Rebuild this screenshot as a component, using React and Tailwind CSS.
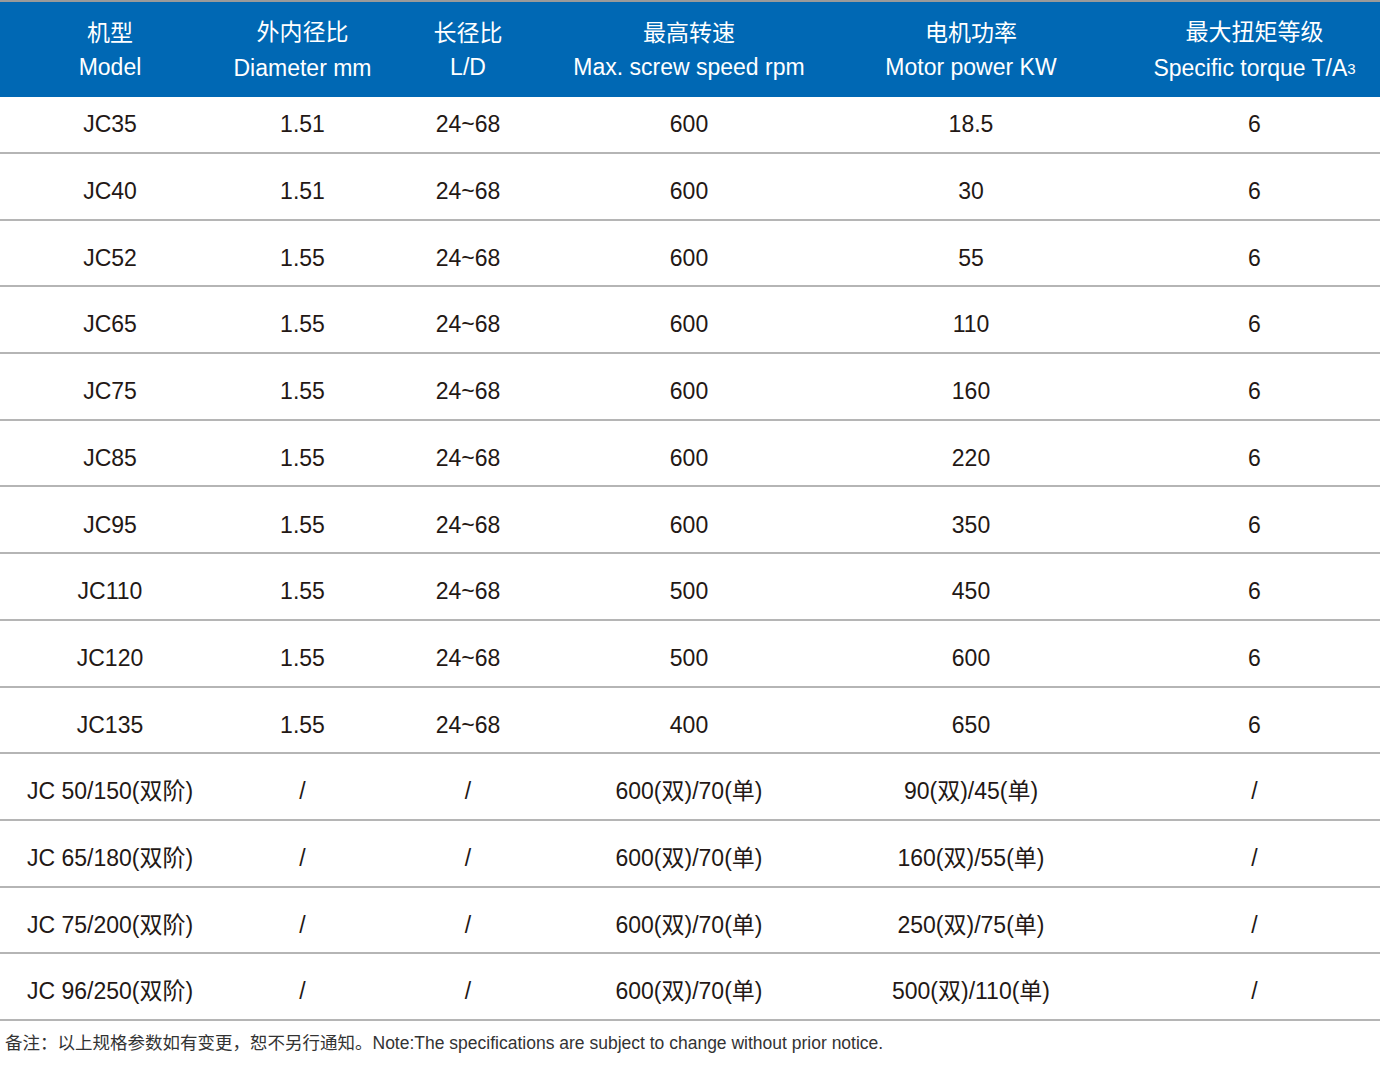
const rows = [
  ["JC35","1.51","24~68","600","18.5","6"],
  ["JC40","1.51","24~68","600","30","6"],
  ["JC52","1.55","24~68","600","55","6"],
  ["JC65","1.55","24~68","600","110","6"],
  ["JC75","1.55","24~68","600","160","6"],
  ["JC85","1.55","24~68","600","220","6"],
  ["JC95","1.55","24~68","600","350","6"],
  ["JC110","1.55","24~68","500","450","6"],
  ["JC120","1.55","24~68","500","600","6"],
  ["JC135","1.55","24~68","400","650","6"],
  ["JC 50/150(双阶)","/","/","600(双)/70(单)","90(双)/45(单)","/"],
  ["JC 65/180(双阶)","/","/","600(双)/70(单)","160(双)/55(单)","/"],
  ["JC 75/200(双阶)","/","/","600(双)/70(单)","250(双)/75(单)","/"],
  ["JC 96/250(双阶)","/","/","600(双)/70(单)","500(双)/110(单)","/"],
];
const grid = "grid grid-cols-[220px_165px_166px_276px_288px_1fr]";
export default function App() {
  return (
    <div className="w-[1380px] h-[1065px] bg-white text-[#231815]" style={{fontFamily:'"Liberation Sans","Noto Sans CJK SC",sans-serif'}}>
      <div className="h-[2px] bg-[#9a9a9a]" />
      <div className={`${grid} h-[95px] bg-[#0068b4] text-white text-[23px] leading-[34px] items-center text-center`}>
        <div><div>机型</div><div>Model</div></div>
        <div><div>外内径比</div><div className="mt-[2px]">Diameter mm</div></div>
        <div><div>长径比</div><div>L/D</div></div>
        <div><div>最高转速</div><div>Max. screw speed rpm</div></div>
        <div><div>电机功率</div><div>Motor power KW</div></div>
        <div className="pl-[14px] whitespace-nowrap"><div>最大扭矩等级</div><div className="mt-[2px]">Specific torque T/A<sup className="text-[15px] relative top-[-2px]">3</sup></div></div>
      </div>
      {rows.map((r, i) => (
        <div key={i} className={`${grid} ${i === 0 ? "h-[57px]" : "h-[66.7px] pt-[10px]"} border-b-2 border-[#b5b5b5] items-center text-center text-[23px]`}>
          {r.map((c, j) => (
            <div key={j} className={j === 5 ? "pl-[14px]" : ""}>{c}</div>
          ))}
        </div>
      ))}
      <div className="pl-[5px] pt-[9px] text-[17.5px] text-[#333]">备注：以上规格参数如有变更，恕不另行通知。Note:The specifications are subject to change without prior notice.</div>
    </div>
  );
}
